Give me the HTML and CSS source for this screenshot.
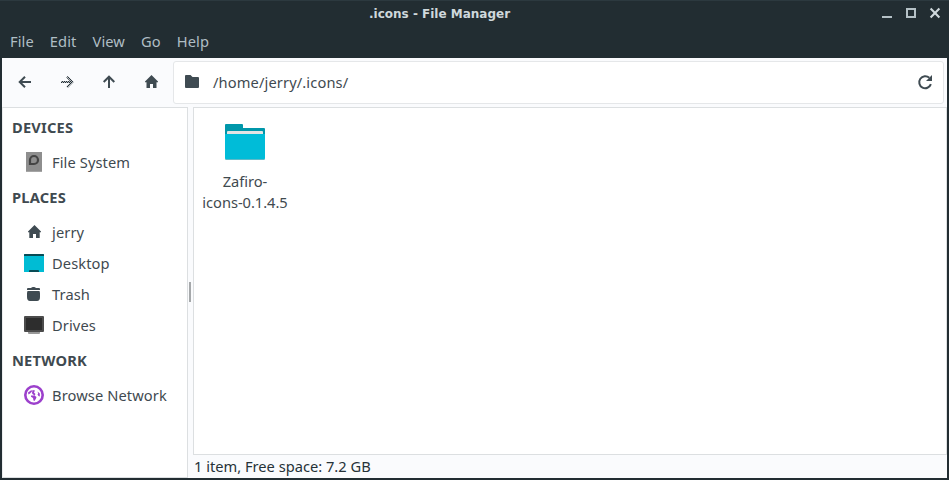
FILE: index.html
```
<!DOCTYPE html>
<html lang="en">
<head>
<meta charset="utf-8">
<title>.icons - File Manager</title>
<link rel="stylesheet" href="styles.css">
</head>
<body>
<div class="window">
  <header class="titlebar">
    <h1 class="title">.icons - File Manager</h1>
    <div class="controls">
      <svg width="12" height="12" viewBox="0 0 12 12"><path d="M1 9h10v2H1z" fill="#b5c1c6"/></svg>
      <svg width="12" height="12" viewBox="0 0 12 12"><path d="M2 2h8v8H2z" fill="none" stroke="#b5c1c6" stroke-width="2"/></svg>
      <svg width="12" height="12" viewBox="0 0 12 12"><path d="M1.600 1.600l8.800 8.800M10.400 1.600l-8.800 8.800" fill="none" stroke="#cfd8dc" stroke-width="2.100"/></svg>
    </div>
  </header>
  <nav class="menubar"><span>File</span><span>Edit</span><span>View</span><span>Go</span><span>Help</span></nav>
  <div class="toolbar">
    <div class="tools">
      <svg width="16" height="16" viewBox="0 0 16 16"><path d="M14 8H3.500M8 2.700L2.700 8 8 13.300" fill="none" stroke="#3f4b52" stroke-width="2"/></svg>
      <svg width="16" height="16" viewBox="0 0 16 16"><defs><pattern id="dither" width="2" height="2" patternUnits="userSpaceOnUse"><path d="M0 0h2v2H0z" fill="#b4babe"/><path d="M0 0h1v1H0zM1 1h1v1H1z" fill="#242f36"/></pattern></defs><path d="M2 8h10.500M8 2.700L13.300 8 8 13.300" fill="none" stroke="url(#dither)" stroke-width="2"/></svg>
      <svg width="16" height="16" viewBox="0 0 16 16"><path d="M8 14V3.500M2.700 8L8 2.700 13.300 8" fill="none" stroke="#3f4b52" stroke-width="2"/></svg>
      <svg width="16" height="16" viewBox="0 0 16 16"><path d="M8.500 1L15 7.500V8.200H13.500V14H10V10H7v4H3.500V8.200H2V7.500z" fill="#3f4b52"/></svg>
    </div>
    <div class="location">
      <svg width="16" height="16" viewBox="0 0 16 16"><path d="M2 1h4.500l2 2H14q1 0 1 1v9q0 1-1 1H2q-1 0-1-1V2q0-1 1-1z" fill="#3f4b52"/></svg>
      <span class="path">/home/jerry/.icons/</span>
      <svg class="reload" width="16" height="16" viewBox="0 0 16 16"><path d="M13.900 10.200A6 6 0 1 1 12.300 3.800" fill="none" stroke="#3f4b52" stroke-width="2"/><path d="M15 1v6H9z" fill="#3f4b52"/></svg>
    </div>
  </div>
  <main class="body">
    <aside class="sidebar">
      <h2>DEVICES</h2>
      <div class="row"><svg width="20" height="20" viewBox="0 0 20 20"><path d="M2 0h16v20H2z" fill="#8e8e8e"/><path d="M2 19h16v1H2z" fill="#a5a5a5"/><path d="M6 12V8a4 4 0 1 1 4 4z" fill="none" stroke="#444" stroke-width="2.200"/></svg><span>File System</span></div>
      <h2>PLACES</h2>
      <div class="row"><svg width="20" height="20" viewBox="0 0 20 20"><path d="M10.500 3L17 9.500V10.200H15.700V16H12V12H9v4H5.300V10.200H4V9.500z" fill="#3f4b52"/></svg><span>jerry</span></div>
      <div class="row"><svg width="20" height="20" viewBox="0 0 20 20"><path d="M0 1h20v18H0z" fill="#00bcd4"/><path d="M0 2q0-1 1-1h18q1 0 1 1v1H0zM5 19v-1q0-1 1-1h8q1 0 1 1v1z" fill="#084b55"/></svg><span>Desktop</span></div>
      <div class="row"><svg width="20" height="20" viewBox="0 0 20 20"><path d="M3 6V5q0-1 1-1h3q1-1 2-1h1q1 0 2 1h3q1 0 1 1v1zM3.500 7h12L16 9v4q0 4-3 4H6q-3 0-3-4V9z" fill="#3f4b52"/></svg><span>Trash</span></div>
      <div class="row"><svg width="20" height="20" viewBox="0 0 20 20"><path d="M4 17h12v1q0 1-1 1H5q-1 0-1-1z" fill="#999"/><rect y="1" width="20" height="16" rx="1" fill="#4c4c4c"/><path d="M2 3h16v12H2z" fill="#2d2d2d"/></svg><span>Drives</span></div>
      <h2>NETWORK</h2>
      <div class="row"><svg width="20" height="20" viewBox="0 0 20 20"><circle cx="10" cy="10" r="8.700" fill="#fff" stroke="#9c40cc" stroke-width="2.600"/><path d="M4 7.500L7.500 5 8 6.500 6 8.500 4.500 9.500zM8.500 5l2.500.5-1 2 1.500 1.500-1 1.500L8.500 9 8 8zM7 10.500h3.500l2 1.500-.5 1.500-1.500 2.500-1-.5-.5-2.500L7 11.800zM13.500 6.500l2.300 2v3l-1.300-.5-1-1.500.7-1z" fill="#9c40cc"/></svg><span>Browse Network</span></div>
    </aside>
    <div class="splitter"><i></i></div>
    <div class="pane">
      <section class="files">
        <div class="item">
          <svg width="42" height="38" viewBox="0 0 42 38"><path d="M1 36h40q0 1-1.500 1H2.500Q1 37 1 36z" fill="#bbb"/><path d="M1 2q0-1 1-1h16q1 0 1 1v3h21q1 0 1 1v8H1z" fill="#0097aa"/><path d="M3 12V9q0-1 1-1h34q1 0 1 1v3z" fill="#e4e4e4"/><path d="M1 11h40v24q0 1.500-1 1.500H2q-1 0-1-1.500z" fill="#00bcd8"/></svg>
          <span>Zafiro-<br>icons-0.1.4.5</span>
        </div>
      </section>
      <footer class="status">1 item, Free space: 7.2 GB</footer>
    </div>
  </main>
</div>
</body>
</html>
```
FILE: styles.css
```
* { box-sizing: border-box; }

body {
  margin: 0;
  width: 949px;
  height: 480px;
  overflow: hidden;
  font: 14.67px/21px "Noto Sans", sans-serif;
  color: #3f4a50;
}

svg { display: block; flex: none; }

.window {
  height: 480px;
  display: flex;
  flex-direction: column;
  padding: 0 2px 2px;
  background: #222d32;
  border-top: 1px solid #2c393f;
}

.titlebar {
  flex: none;
  height: 27px;
  display: flex;
  align-items: center;
}

.title {
  flex: 1;
  margin: 0 0 2px;
  padding-left: 367px;
  font: bold 12px/16px "DejaVu Sans", sans-serif;
  color: #cfd8dc;
}

.controls {
  display: flex;
  gap: 12px;
  padding: 0 6px 3px 0;
}

.menubar {
  flex: none;
  height: 30px;
  display: flex;
  align-items: center;
  gap: 16px;
  padding: 0 8px 4px;
  letter-spacing: 0.1px;
  color: #b0bec5;
}

.toolbar {
  flex: none;
  height: 49px;
  display: flex;
  background: #fafbfd;
}

.tools {
  width: 171px;
  display: flex;
  gap: 26px;
  padding: 16px 0 0 15px;
}

.location {
  flex: 1;
  height: 43px;
  margin: 3px 3px 0 0;
  padding: 0 10px 1px;
  display: flex;
  align-items: center;
  background: #fff;
  border: 1px solid #e5e7e9;
  border-radius: 3px;
}

.path { margin-left: 13px; letter-spacing: 0.12px; }

.reload { margin-left: auto; }

.body {
  flex: 1;
  min-height: 0;
  display: flex;
  background: #fafbfd;
}

.sidebar {
  width: 186px;
  background: #fff;
  border: 1px solid #dcdfe1;
  border-left-color: #eceeef;
  letter-spacing: 0.1px;
}

.sidebar h2 {
  margin: 0;
  padding-left: 9px;
  font-size: 14.67px;
  line-height: 39px;
  letter-spacing: 0.2px;
}

.row {
  height: 31px;
  display: flex;
  align-items: center;
  gap: 8px;
  padding-left: 21px;
}

.row svg { margin-bottom: 1px; }

.splitter {
  width: 5px;
  display: flex;
  align-items: center;
  padding: 0 0 2px 1px;
}

.splitter i { width: 2px; height: 20px; background: #a5a8aa; }

.pane {
  flex: 1;
  display: flex;
  flex-direction: column;
}

.files {
  flex: 1;
  padding: 15px 0 0 9px;
  background: #fff;
  border: 1px solid #dcdfe1;
}

.item {
  width: 84px;
  display: flex;
  flex-direction: column;
  align-items: center;
  gap: 10px;
  text-align: center;
  white-space: nowrap;
  letter-spacing: -0.04px;
}

.status {
  height: 23px;
  padding-left: 1px;
  line-height: 23px;
  color: #263238;
}
```
